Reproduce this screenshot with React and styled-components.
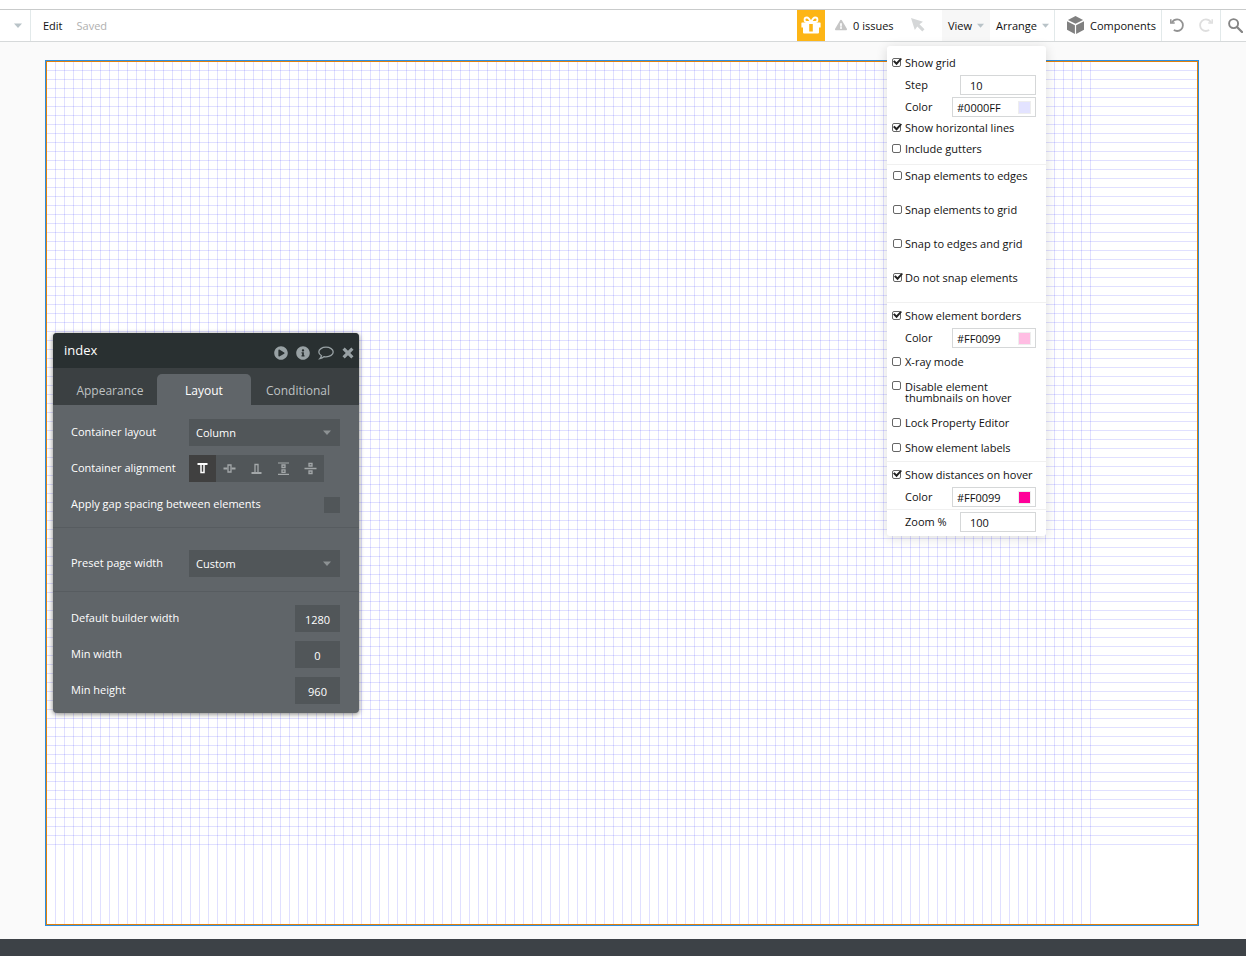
import React, { useState } from 'react'
import styled, { createGlobalStyle } from 'styled-components'
import { FaExclamationTriangle, FaPlayCircle, FaInfoCircle } from 'react-icons/fa'


const GlobalStyle = createGlobalStyle`
    * {
        box-sizing: border-box;
    }

    body {
        margin: 0;
        background: #fafafa;
    }

    body, button, input, select {
        font-family: "Open Sans", "Noto Sans", sans-serif;
        font-size: 11px;
        line-height: 15px;
        color: #111;
    }
`

const Editor = styled.div`
    position: relative;
    display: flex;
    flex-direction: column;
    min-height: 100vh;
`

const Toolbar = styled.header`
    display: flex;
    flex: none;
    height: 33px;
    margin-top: 9px;
    background: #fff;
    border-top: 1px solid #c9cbcb;
    border-bottom: 1px solid #d6d9da;
`

const TopStrip = styled.div`
    background: #fff;
    display: flow-root;
`

const ToolButton = styled.button`
    display: flex;
    flex: none;
    align-items: center;
    justify-content: ${props => props.$center ? 'center' : 'flex-start'};
    gap: ${props => props.$gap || 6}px;
    width: ${props => props.$width ? props.$width + 'px' : 'auto'};
    padding: 0 0 ${props => props.$menu ? 0 : 1}px ${props => props.$left || 0}px;
    border: 0;
    border-right: ${props => props.$divider ? '1px solid #e2e9ea' : '0'};
    background: ${props => props.$open ? '#f7f7f7' : 'transparent'};
    white-space: nowrap;
`

const GiftButton = styled(ToolButton)`
    background: #fdb515;
    color: #fff;
`

const Saved = styled.span`
    align-self: center;
    margin-left: 14px;
    padding-bottom: 1px;
    color: #b0b0b0;
`

const Spacer = styled.div`
    flex: 1;
`

const Canvas = styled.main`
    display: flex;
    flex: 1;
    padding: 18px 47px 13px 45px;
`

const Page = styled.div`
    position: relative;
    flex: 1;
    border: 1px solid #2d8fe0;
    box-shadow: inset 0 0 0 1px #e0800c;
    background-color: #fff;
    background-image:
        repeating-linear-gradient(90deg, rgba(0, 0, 255, 0.12) 0 1px, transparent 1px 9px),
        repeating-linear-gradient(180deg, rgba(0, 0, 255, 0.12) 0 1px, transparent 1px 9px);
    background-size: 1045px 100%, 100% 784px;
    background-repeat: no-repeat;
`

const Footer = styled.footer`
    flex: none;
    height: 17px;
    background: #3d4247;
`

const Menu = styled.div`
    position: absolute;
    top: 46px;
    right: 200px;
    width: 159px;
    background: #fff;
    border-radius: 3px;
    box-shadow: 0 2px 12px rgba(0, 0, 0, 0.14);
`

const MenuSection = styled.section`
    display: flex;
    flex-direction: column;
    gap: ${props => props.$gap || 0}px;
    padding: ${props => props.$top || 0}px 10px ${props => props.$bottom || 0}px 5px;
    border-bottom: 1px solid #f0f0f0;

    &:last-child {
        border-bottom: 0;
    }
`

const CheckRow = styled.label`
    display: flex;
    align-items: ${props => props.$tall ? 'flex-start' : 'center'};
    gap: ${props => props.$indent ? 3 : 4}px;
    height: ${props => props.$height || 22}px;
    padding-left: ${props => props.$indent ? 1 : 0}px;
    padding-top: ${props => props.$tall ? 7 : 0}px;
    line-height: ${props => props.$tall ? 11 : 15}px;
`

const Checkbox = styled.input.attrs({ type: 'checkbox' })`
    appearance: none;
    position: relative;
    flex: none;
    width: 9px;
    height: 9px;
    margin: 0;
    border: 1px solid #666;
    border-radius: 2px;
    background: #fff;

    &:checked::after {
        content: '';
        position: absolute;
        left: 0;
        top: -1px;
        width: 9px;
        height: 8px;
        background: #222;
        clip-path: polygon(0 50%, 18% 35%, 38% 60%, 85% 5%, 100% 20%, 40% 98%);
    }
`

const FieldRow = styled.div`
    display: flex;
    align-items: flex-end;
    justify-content: space-between;
    height: 22px;
    padding-left: 13px;

    & > label {
        align-self: center;
    }
`

const StepInput = styled.input`
    width: 76px;
    height: 20px;
    padding: 0 9px;
    border: 1px solid #d5d7d8;
    background: #fff;
`

const ColorField = styled.div`
    display: flex;
    align-items: center;
    width: 84px;
    height: 20px;
    padding: 0 4px;
    border: 1px solid #d5d7d8;

    & > input {
        width: 61px;
        padding: 0;
        border: 0;
        background: none;
    }
`

const Swatch = styled.button`
    width: 13px;
    height: 13px;
    padding: 0;
    border: 1px solid #eee;
    background: ${props => props.$color};
`

const Panel = styled.section`
    position: absolute;
    left: 7px;
    top: 272px;
    width: 306px;
    overflow: hidden;
    border-radius: 4px;
    background: #606569;
    color: #fff;
    box-shadow: 0 1px 5px rgba(0, 0, 0, 0.5);
`

const PanelTitle = styled.div`
    display: flex;
    align-items: center;
    justify-content: space-between;
    height: 35px;
    padding: 0 5px 0 11px;
    background: #293031;
    font-size: 13px;
`

const TitleActions = styled.div`
    display: flex;
    align-items: center;
    gap: 8px;
    padding-top: 4px;
`

const TitleButton = styled.button`
    display: flex;
    padding: 0;
    border: 0;
    background: none;
    color: #98a1a4;
`

const Tabs = styled.div`
    display: flex;
    align-items: flex-end;
    height: 37px;
    padding-left: 10px;
    background: #3b4042;
`

const Tab = styled.button`
    width: 94px;
    height: 31px;
    padding: 2px 0 0;
    border: 0;
    border-radius: 5px 5px 0 0;
    background: ${props => props.$active ? '#606569' : 'transparent'};
    color: ${props => props.$active ? '#fff' : '#bfc2c3'};
    font-size: 12px;
`

const PanelSection = styled.div`
    display: flex;
    flex-direction: column;
    gap: 9px;
    padding: ${props => props.$top}px 19px ${props => props.$bottom}px 18px;
    border-bottom: 1px solid #575c60;

    &:last-child {
        border-bottom: 0;
    }
`

const PropertyRow = styled.div`
    display: flex;
    align-items: center;
    height: 27px;
`

const PropertyLabel = styled.label`
    flex: 1;
    padding-bottom: 2px;
    color: #fff;
`

const SelectBox = styled.div`
    position: relative;
    width: 151px;

    & > svg {
        position: absolute;
        right: 9px;
        top: 11px;
        pointer-events: none;
    }
`

const Select = styled.select`
    appearance: none;
    width: 100%;
    height: 27px;
    padding: 0 7px;
    border: 0;
    border-radius: 0;
    background: #515659;
    color: #fff;
`

const AlignGroup = styled.div`
    display: flex;
    width: 151px;
`

const AlignButton = styled.button`
    display: flex;
    align-items: center;
    justify-content: center;
    width: 27px;
    height: 27px;
    padding: 0;
    border: 0;
    background: ${props => props.$active ? '#404040' : '#515659'};
    color: ${props => props.$active ? '#fff' : '#a3a7a9'};
`

const GapCheckbox = styled.input.attrs({ type: 'checkbox' })`
    appearance: none;
    width: 16px;
    height: 16px;
    margin: 1px 0 0;
    background: #515659;
`

const NumberInput = styled.input`
    width: 45px;
    height: 27px;
    padding: 2px 0 0;
    border: 0;
    background: #515659;
    color: #fff;
    text-align: center;
`


const Caret = ({ color = '#b9c3c8', width = 8 }) => (
    <svg width={width} height="5" viewBox="0 0 8 5" aria-hidden="true">
        <path d="M0 0.5h8L4 5z" fill={color} />
    </svg>
)

const GiftIcon = () => (
    <svg width="20" height="18" viewBox="0 0 20 18" aria-hidden="true">
        <path d="M1 6.5h18a.6.6 0 0 1 .6.6v4.300h-1.600v5.200a1 1 0 0 1-1 1H3a1 1 0 0 1-1-1v-5.200H.4V7.100a.6.6 0 0 1 .6-.6z" fill="#fff" />
        <path d="M8.200 8h3.600v7.500H8.200z" fill="#fdb515" />
        <path d="M9.800 6C8.600 3.200 7.300 1.500 5.800 1.500a2.200 2.200 0 0 0 0 4.500zM10.200 6c1.200-2.800 2.500-4.500 4-4.500a2.200 2.200 0 0 1 0 4.500z" fill="none" stroke="#fff" strokeWidth="1.8" />
    </svg>
)

const CursorIcon = () => (
    <svg width="14" height="14" viewBox="0 0 14 14" aria-hidden="true">
        <path d="M0 0l12 3.800-3.500 2.500 5 5-2.200 2.200-5-5L3.800 12z" fill="#d5d7d8" />
    </svg>
)

const CubeIcon = () => (
    <svg width="17" height="18" viewBox="0 0 17 18" aria-hidden="true">
        <path d="M8.5 0l7.6 3.9-7.6 3.9L.9 3.9z" fill="#808080" />
        <path d="M0 5.2l7.9 4V18L0 13.7zM17 5.2l-7.9 4V18L17 13.7z" fill="#808080" />
    </svg>
)

const TurnIcon = ({ color, flip }) => (
    <svg width="14" height="15" viewBox="0 0 14 15" fill="none" stroke={color} strokeWidth="1.8" aria-hidden="true">
        <g transform={flip ? 'matrix(-1 0 0 1 14 0)' : undefined}>
            <path d="M1.8 4.4C3.2 2.4 5 1.4 7.100 1.400a5.800 5.800 0 0 1 0 11.600c-1.200 0-2.300-.3-3.300-.9" />
            <path d="M.8 1.200v3.700h3.900" strokeWidth="1.5" />
        </g>
    </svg>
)

const SearchIcon = () => (
    <svg width="15" height="15" viewBox="0 0 15 15" fill="none" stroke="#858585" aria-hidden="true">
        <circle cx="5.6" cy="5.6" r="4.5" strokeWidth="1.9" />
        <path d="M9 9l5 5" strokeWidth="2.3" strokeLinecap="round" />
    </svg>
)

const CommentIcon = () => (
    <svg width="16" height="14" viewBox="0 0 16 14" fill="none" stroke="currentColor" strokeWidth="1.3" aria-hidden="true">
        <path d="M8 1.2c4 0 7.2 2.1 7.2 4.8S12 10.8 8 10.8c-.6 0-1.2-.1-1.8-.2-1.2 1-2.6 1.7-4.3 2 .8-.8 1.4-1.7 1.6-2.9C1.8 8.8.8 7.5.8 6 .8 3.3 4 1.2 8 1.2z" />
    </svg>
)

const CloseIcon = () => (
    <svg width="12" height="12" viewBox="0 0 12 12" fill="none" stroke="currentColor" strokeWidth="3.2" aria-hidden="true">
        <path d="M1.6 1.6l8.800 8.800M10.400 1.600l-8.800 8.800" />
    </svg>
)

const ALIGN_SHAPES = {
    top: <><path d="M1 2h10" strokeWidth="2" /><path d="M4.5 2v8.5h3V2" strokeWidth="1.5" /></>,
    center: <><path d="M0 6.5h4M8 6.5h4" strokeWidth="2" /><path d="M4.5 3h3v7h-3z" strokeWidth="1.3" /></>,
    bottom: <><path d="M1 11h10" strokeWidth="2" /><path d="M4.5 11V2.500h3V11" strokeWidth="1.3" /></>,
    between: <><path d="M.5 1h11M.5 12.400h11" strokeWidth="1.2" /><path d="M4.500 3h3v2.500h-3zM4.500 7.800h3v2.500h-3z" strokeWidth="1.3" /></>,
    around: <><path d="M0 6.5h12" strokeWidth="1.6" /><path d="M4.5 1.500h3V4h-3zM4.500 9h3v2.500h-3z" strokeWidth="1.3" /></>
}

const AlignIcon = ({ kind }) => (
    <svg width="13" height="13" viewBox="0 0 12 13" fill="none" stroke="currentColor" aria-hidden="true">
        {ALIGN_SHAPES[kind]}
    </svg>
)


const Check = ({ label, checked, ...rest }) => (
    <CheckRow {...rest}>
        <Checkbox defaultChecked={checked} />
        <span>{label}</span>
    </CheckRow>
)

const MenuColor = ({ id, value, swatch }) => (
    <FieldRow>
        <label htmlFor={id}>Color</label>
        <ColorField>
            <input id={id} defaultValue={value} />
            <Swatch $color={swatch} aria-label="Pick color" />
        </ColorField>
    </FieldRow>
)

const ViewMenu = () => (
    <Menu>
        <MenuSection $top={5} $bottom={5}>
            <Check label="Show grid" checked />
            <FieldRow>
                <label htmlFor="step">Step</label>
                <StepInput id="step" defaultValue="10" />
            </FieldRow>
            <MenuColor id="grid-color" value="#0000FF" swatch="#e3e3ff" />
            <Check label="Show horizontal lines" $height={21} checked />
            <Check label="Include gutters" $height={21} />
        </MenuSection>
        <MenuSection $gap={14} $bottom={15}>
            <Check label="Snap elements to edges" $height={20} $indent />
            <Check label="Snap elements to grid" $height={20} $indent />
            <Check label="Snap to edges and grid" $height={20} $indent />
            <Check label="Do not snap elements" $height={20} $indent checked />
        </MenuSection>
        <MenuSection $top={1} $bottom={1}>
            <Check label="Show element borders" checked />
            <MenuColor id="border-color" value="#FF0099" swatch="#ffbde3" />
            <Check label="X-ray mode" $height={26} />
            <Check label="Disable element thumbnails on hover" $height={36} $tall />
            <Check label="Lock Property Editor" $height={25} />
            <Check label="Show element labels" $height={25} />
        </MenuSection>
        <MenuSection $top={1} $bottom={2}>
            <Check label="Show distances on hover" checked />
            <MenuColor id="distance-color" value="#FF0099" swatch="#ff0099" />
        </MenuSection>
        <MenuSection $bottom={4}>
            <FieldRow>
                <label htmlFor="zoom">Zoom %</label>
                <StepInput id="zoom" defaultValue="100" />
            </FieldRow>
        </MenuSection>
    </Menu>
)

const PropertySelect = ({ id, label, value }) => (
    <PropertyRow>
        <PropertyLabel htmlFor={id}>{label}</PropertyLabel>
        <SelectBox>
            <Select id={id} defaultValue={value}>
                <option>{value}</option>
            </Select>
            <Caret color="#8d9294" />
        </SelectBox>
    </PropertyRow>
)

const PropertyNumber = ({ id, label, value }) => (
    <PropertyRow>
        <PropertyLabel htmlFor={id}>{label}</PropertyLabel>
        <NumberInput id={id} defaultValue={value} />
    </PropertyRow>
)

const PropertyEditor = () => {
    const [tab, setTab] = useState('Layout')
    const [align, setAlign] = useState('top')

    return (
        <Panel>
            <PanelTitle>
                <span>index</span>
                <TitleActions>
                    <TitleButton aria-label="Preview"><FaPlayCircle size={14} /></TitleButton>
                    <TitleButton aria-label="Info"><FaInfoCircle size={14} /></TitleButton>
                    <TitleButton aria-label="Comment"><CommentIcon /></TitleButton>
                    <TitleButton aria-label="Close"><CloseIcon /></TitleButton>
                </TitleActions>
            </PanelTitle>
            <Tabs>
                {['Appearance', 'Layout', 'Conditional'].map(name => (
                    <Tab key={name} $active={tab === name} onClick={() => setTab(name)}>{name}</Tab>
                ))}
            </Tabs>
            <PanelSection $top={14} $bottom={9}>
                <PropertySelect id="container-layout" label="Container layout" value="Column" />
                <PropertyRow>
                    <PropertyLabel as="span" id="alignment">Container alignment</PropertyLabel>
                    <AlignGroup role="group" aria-labelledby="alignment">
                        {Object.keys(ALIGN_SHAPES).map(kind => (
                            <AlignButton key={kind} aria-label={kind} $active={align === kind} onClick={() => setAlign(kind)}>
                                <AlignIcon kind={kind} />
                            </AlignButton>
                        ))}
                    </AlignGroup>
                </PropertyRow>
                <PropertyRow>
                    <PropertyLabel htmlFor="gap">Apply gap spacing between elements</PropertyLabel>
                    <GapCheckbox id="gap" />
                </PropertyRow>
            </PanelSection>
            <PanelSection $top={22} $bottom={14}>
                <PropertySelect id="page-width" label="Preset page width" value="Custom" />
            </PanelSection>
            <PanelSection $top={13} $bottom={9}>
                <PropertyNumber id="builder-width" label="Default builder width" value="1280" />
                <PropertyNumber id="min-width" label="Min width" value="0" />
                <PropertyNumber id="min-height" label="Min height" value="960" />
            </PanelSection>
        </Panel>
    )
}

const App = () => (
    <>
        <GlobalStyle />
        <Editor>
            <TopStrip>
                <Toolbar>
                    <ToolButton $width={31} $left={14} $menu $divider aria-label="Pages"><Caret /></ToolButton>
                    <ToolButton $left={12}>Edit</ToolButton>
                    <Saved>Saved</Saved>
                    <Spacer />
                    <GiftButton $width={28} $center aria-label="Gift"><GiftIcon /></GiftButton>
                    <ToolButton $width={76} $left={10}>
                        <FaExclamationTriangle size={12} color="#c6c6c6" />
                        0 issues
                    </ToolButton>
                    <ToolButton $width={41} $left={10} aria-label="Inspect"><CursorIcon /></ToolButton>
                    <ToolButton $width={48} $left={6} $gap={5} $menu $open>View <Caret width={7} /></ToolButton>
                    <ToolButton $width={65} $left={6} $gap={5} $menu $divider>Arrange <Caret width={7} /></ToolButton>
                    <ToolButton $width={107} $left={12} $divider><CubeIcon />Components</ToolButton>
                    <ToolButton $width={29} $center aria-label="Undo"><TurnIcon color="#929292" /></ToolButton>
                    <ToolButton $width={30} $center $divider aria-label="Redo"><TurnIcon color="#dedede" flip /></ToolButton>
                    <ToolButton $width={25} $left={7} aria-label="Search"><SearchIcon /></ToolButton>
                </Toolbar>
            </TopStrip>
            <Canvas>
                <Page>
                    <PropertyEditor />
                </Page>
            </Canvas>
            <Footer />
            <ViewMenu />
        </Editor>
    </>
)


export default App
